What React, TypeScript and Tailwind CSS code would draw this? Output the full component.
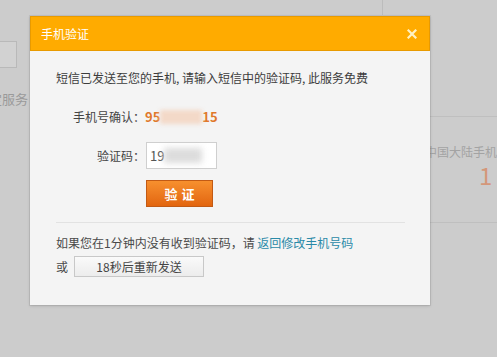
export default function App() {
  return (
    <div className="relative w-[497px] h-[357px] overflow-hidden bg-[#cccccc] text-[12px] leading-[16px] text-[#444] [font-family:'Noto_Sans_CJK_SC','Liberation_Sans',sans-serif]">
      {/* page behind the mask */}
      <div className="flex h-full">
        <div className="w-[382px] shrink-0 pt-[41px]">
          <div className="ml-[-4px] w-[21px] h-[27px] border border-[#b9b9b9] bg-[#d2d2d2]" />
          <p className="mt-[23px] ml-[-11px] text-[13px] text-[#9a9a9a]">定服务</p>
        </div>
        <div className="flex-1 flex flex-col">
          <div className="h-[15px] w-px bg-[#bcbcbc]" />
          <div className="h-[101px]" />
          <div className="h-[107px] border-y border-[#bfbfbf] pl-[45px] pt-[28px]">
            <p className="ml-[-2px] whitespace-nowrap text-[12px] leading-[14px] text-[#a3a3a3]">中国大陆手机</p>
            <p className="mt-[6px] ml-[52px] w-[14px] text-[24px] leading-[20px] text-[#d4977a]">1</p>
          </div>
        </div>
      </div>

      {/* dialog */}
      <div className="absolute left-[30px] top-[16px] w-[400px] h-[289px] bg-[#f4f4f4] shadow-[0_0_0_1px_rgba(0,0,0,0.06),0_1px_3px_rgba(0,0,0,0.15)] flex flex-col">
        <div className="h-[35px] shrink-0 bg-[#ffab00] border border-[#e89a00] flex items-center justify-between pl-[10px] pr-[11px] text-white">
          <span className="text-[12px]">手机验证</span>
          <svg width="10" height="10" viewBox="0 0 10 10" className="mr-[1px]">
            <path d="M1.5 1.5 L8.5 8.5 M8.5 1.5 L1.5 8.5" stroke="#fff2c4" strokeWidth="2.2" strokeLinecap="square" />
          </svg>
        </div>

        <div className="px-[26px] pt-[19px]">
          <p className="whitespace-nowrap text-[#3c3c3c]">短信已发送至您的手机, 请输入短信中的验证码, 此服务免费</p>

          <div className="mt-[23px] flex items-center">
            <span className="w-[89px] text-right">手机号确认：</span>
            <span className="flex items-center text-[13px] font-bold text-[#e0782a]">
              <span>95</span>
              <span className="w-[42px] h-[14px] bg-[#f3d9c8] blur-[2px]" />
              <span>15</span>
            </span>
          </div>

          <div className="mt-[17px] flex items-center">
            <span className="w-[89px] text-right">验证码：</span>
            <div className="ml-[1px] w-[71px] h-[27px] bg-white border border-[#cfcfcf] flex items-center pl-[3px] text-[13px] text-[#555]">
              <span>19</span>
              <span className="w-[38px] h-[15px] bg-[#dcdcdc] blur-[3px]" />
            </div>
          </div>

          <div className="mt-[11px] pl-[90px]">
            <button className="w-[67px] h-[27px] border border-[#c25a14] bg-gradient-to-b from-[#f7902e] to-[#e2650e] text-white text-[13px] font-bold tracking-[4px] pl-[4px]">
              验证
            </button>
          </div>

          <div className="mt-[15px] h-px w-[349px] bg-[#e2e2e2]" />

          <p className="mt-[12px] whitespace-nowrap text-[#4a4a4a]">
            如果您在1分钟内没有收到验证码，请 <span className="text-[#2a8aa8]">返回修改手机号码</span>
          </p>

          <div className="mt-[5px] flex items-center gap-[6px] text-[#4a4a4a]">
            <span>或</span>
            <button className="w-[130px] h-[21px] border border-[#c8c8c8] bg-gradient-to-b from-[#fafafa] to-[#ececec] text-[12px] text-[#444]">
              18秒后重新发送
            </button>
          </div>
        </div>
      </div>
    </div>
  )
}
